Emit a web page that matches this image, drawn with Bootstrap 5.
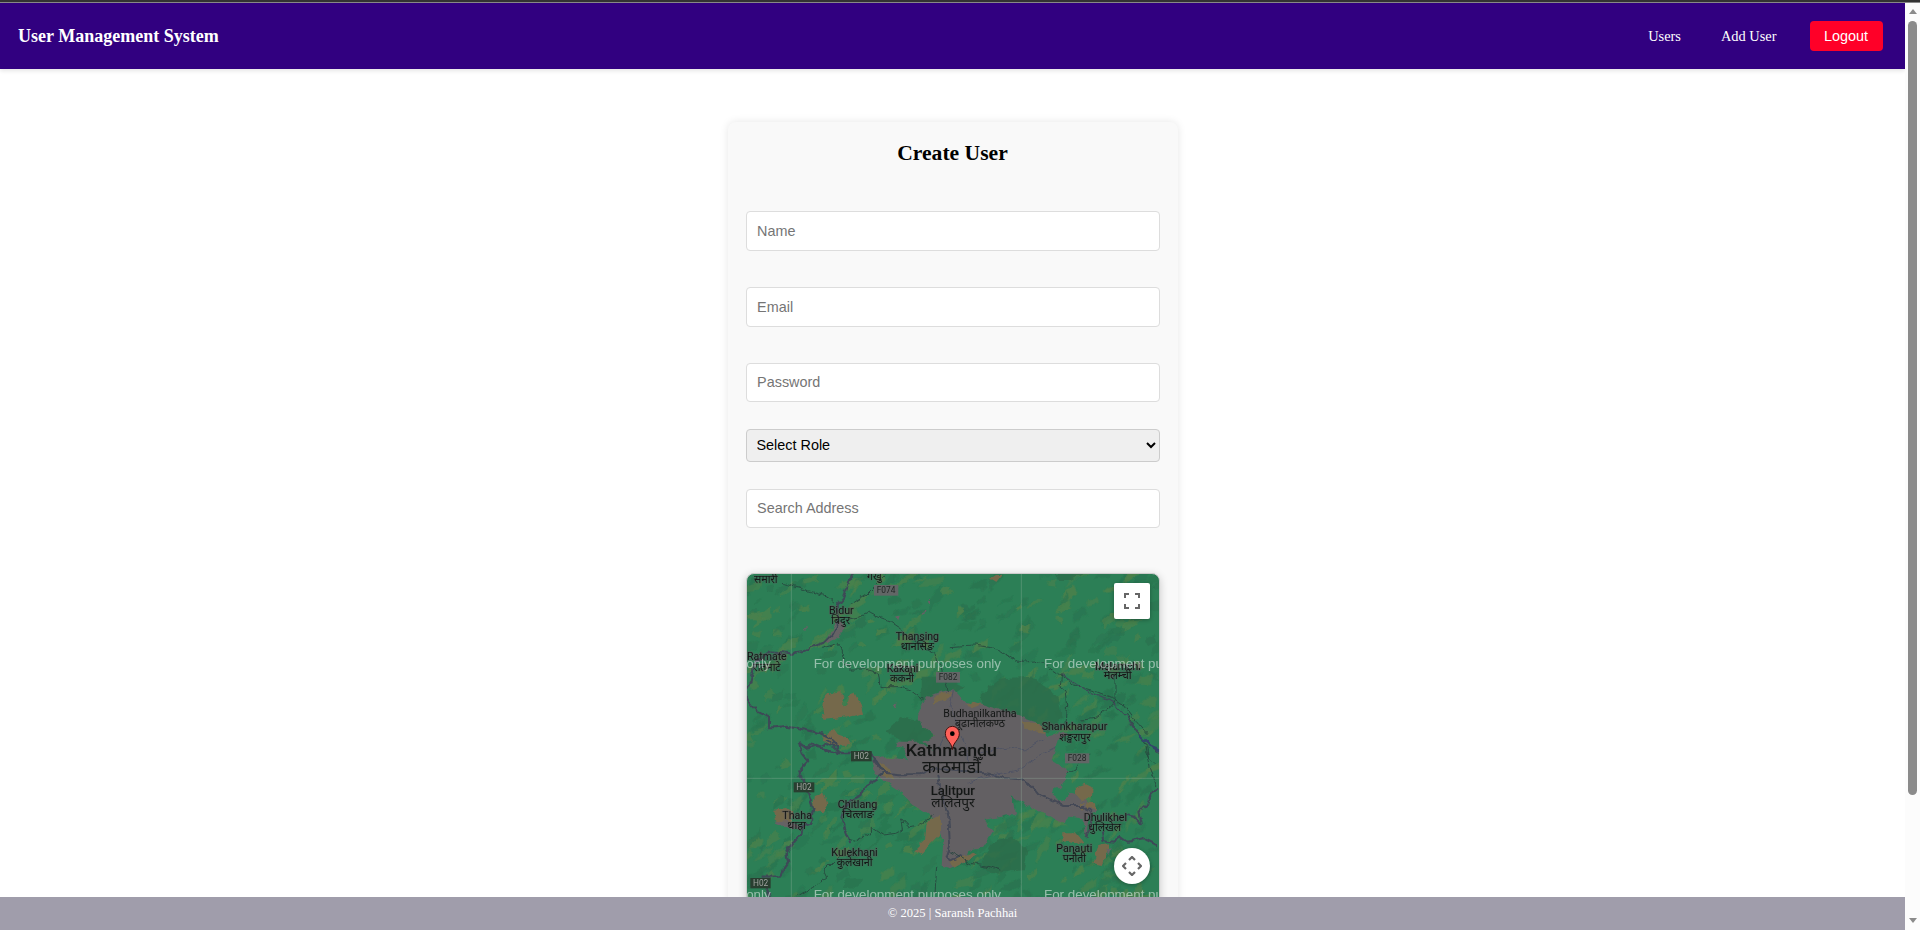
<!DOCTYPE html>
<html lang="en">
<head>
<meta charset="utf-8">
<title>User Management System</title>
<link href="https://cdn.jsdelivr.net/npm/bootstrap@5.3.0/dist/css/bootstrap.min.css" rel="stylesheet">
<style>
html{font-size:16px}
body{font-family:"Liberation Serif",serif;font-size:14.4px;color:#000;height:930px;line-height:1.2}
.window-edge{height:3px;background:#333;border-bottom:1px solid #888}
.topbar{height:66px;background:#310080;padding:0 22px 0 18px;box-shadow:0 2px 4px rgba(0,0,0,.1);flex-shrink:0}
.topbar .navbar-brand{font-size:18px;font-weight:700;color:#fff;padding:0;line-height:20px}
.topbar .nav-link{font-size:14.4px;color:#fff;padding:1px 1px 0 0}
.menu{gap:39px}
.btn-logout{width:73px;height:30px;margin-left:-6.5px;padding:0 1px 0 0;border:0;border-radius:4px;background:#ff0028;color:#fff;font:14.4px/30px "Liberation Sans",sans-serif}
.user-card{width:450px;height:1000px;margin-top:53px;padding:19px 18px;background:#f9f9f9;border:0;border-radius:8px;box-shadow:0 0 9px rgba(0,0,0,.1)}
.user-card h2{font-size:21.6px;font-weight:700;line-height:25px;margin:0 0 45px}
.user-card .form-control,.user-card .form-select{font:14.4px "Liberation Sans",sans-serif;border-radius:4px;padding:0 10px 1px 10.6px;border:1px solid #ddd;background-color:#fff;color:#000;flex-shrink:0}
.user-card .form-control{height:39px}
.user-card .form-control.field-tall{height:40px;margin-bottom:36px;padding-bottom:0}
.form-control::placeholder{color:#757575}
.user-card .form-select{height:33px;margin:27px 0;background:#efefef;border-color:#ccc;appearance:auto;padding:0 0 1px 6px}
.map-box{height:414px;margin-top:45px;border:1px solid #ccc;border-radius:8px;background:#2c7f56;overflow:hidden;box-shadow:0 2px 8px rgba(0,0,0,.2);flex-shrink:0}
.map-box svg{display:block}
.map-btn{width:36px;height:36px;background:#fff;right:9px;box-shadow:0 1px 4px rgba(0,0,0,.3)}
.map-full{top:9px;border-radius:2px}
.map-pan{top:274px;border-radius:50%}
.page-foot{height:33px;background:#a09dab;color:#fff;font-size:12.6px;flex-shrink:0}
.scroll-rail{width:15px;background:#fcfcfc;padding:6px 0 7px}
.thumb{width:9px;height:774px;border-radius:5px;background:#8b8b8b;margin-top:7px}
.arrow{border:4.5px solid transparent;border-top-width:0;border-bottom:5px solid #8b8b8b}
.arrow.down{border-bottom-width:0;border-top:5px solid #8b8b8b}
.place{font-family:Roboto,sans-serif;font-weight:400;fill:#141716;stroke:#5c5a5c;stroke-opacity:.55;stroke-width:5px;paint-order:stroke;stroke-linejoin:round}
.place.town{font-weight:500}
.deva{font-family:"Noto Sans",sans-serif;font-weight:400;stroke-opacity:.3}
.mark-txt{font:41px "Liberation Sans",sans-serif;fill:#fff;fill-opacity:.5}
.shield{font:400 25px Roboto,sans-serif}
</style>
</head>
<body class="d-flex flex-column overflow-hidden m-0 bg-white">
<div class="window-edge flex-shrink-0"></div>
<div class="d-flex flex-grow-1 overflow-hidden">
 <div class="d-flex flex-column flex-grow-1 overflow-hidden">
  <nav class="topbar d-flex align-items-center justify-content-between position-relative">
   <a class="navbar-brand" href="#">User Management System</a>
   <div class="menu d-flex align-items-center">
    <a class="nav-link" href="#">Users</a><a class="nav-link" href="#">Add User</a>
    <button class="btn-logout">Logout</button>
   </div>
  </nav>
  <main class="flex-grow-1 overflow-hidden d-flex justify-content-center align-items-start">
   <form class="card user-card">
    <h2 class="text-center">Create User</h2>
    <input class="form-control field-tall" placeholder="Name">
    <input class="form-control field-tall" placeholder="Email">
    <input class="form-control" placeholder="Password">
    <select class="form-select"><option>Select Role</option></select>
    <input class="form-control" placeholder="Search Address">
    <div class="map-box position-relative">
<svg width="412" height="412" viewBox="36 42 1236 1236">
<defs><filter id="rough" x="0" y="0" width="1280" height="1280" filterUnits="userSpaceOnUse"><feTurbulence type="fractalNoise" baseFrequency=".035" numOctaves="3" seed="4" result="n"/><feDisplacementMap in="SourceGraphic" in2="n" scale="20" xChannelSelector="R" yChannelSelector="G"/></filter></defs>
<g id="terrain" filter="url(#rough)"></g>
<g filter="url(#rough)">
<g fill="#2d6c4b" opacity=".8">
 <path d="M500 470l70 20 40 60-20 20-60-5-80-50z"/><path d="M740 400l60-45 90-5 80 60 10 60-40 50-80-10-120-65z"/>
 <path d="M560 350l70 0 60 30-40 25-90 20z"/><path d="M770 850l60-20 50 40-10 60-100 10-30-30z"/><path d="M955 42h85l-30 18-40 0z"/>
</g>
<path fill="#636163" d="M555 450L575 410L615 395L655 388L700 435L720 425L765 440L815 455L880 480L915 492L935 530L990 515L1000 525L965 540L950 600L1005 635L975 670L978 710L945 730L1000 700L1050 715L1085 750L1060 770L1055 830L1040 790L985 790L925 760L885 740L850 720L830 705L840 760L800 770L745 780L775 812L745 860L700 870L690 905L645 925L620 918L625 840L600 780L570 755L530 730L500 700L470 680L420 640L410 590L480 595L520 600L505 565L480 560L485 545L550 545L600 580L565 545L600 530L545 480Z"/>
<g fill="#75694c">
 <path d="M262 450L270 415L285 400L312 393L328 408L324 434L336 438L344 404L362 402L375 430L384 460L340 472L268 479Z"/><path d="M270 520l20-8 45 17 12 20-60 10-20-20z"/>
 <path d="M240 705l25-10 12 40-15 22-30-5z"/><path d="M118 752l35-5 15 10 5 25-30 12-20-15z"/><path d="M575 785l40-20 0 60-25 25-30 35-20-15 30-30z"/>
 <path d="M1025 680l25-9 20 10-2 30-30 10-12-15z"/><path d="M1035 725l45 5 2 20-45-5z"/><path d="M985 820l40 0 20 25-25 10-35-10z"/><path d="M1090 855l30-5 0 20-20 45-25-5z"/>
 <path d="M590 412l35-15 30 0-20 22-40 12z"/><path d="M690 440l25-15 25 8-30 12zM860 485l50 5 20 30-50-10zM415 597l45 25 15 40-30-15z"/><path d="M265 542h75l-10 15-40 0z"/><path d="M645 905l70-30 10 8-70 40z"/>
 <path d="M763 55l20-13h20l-20 25z"/>
</g>
<g fill="#666265"><path d="M275 245l25-60 25 0 10 20-25 25-30 20zM480 170l15-5-5 15zM575 130l10-8 0 14zM205 210l10-10 0 12zM470 440l15-15-5 20zM120 785l40-5 40 20-30 8zM1040 735l15-12 0 20zM1110 870l20-5-5 20zM560 160l15-10-5 12zM1130 350l12-3-8 8z"/></g>
<path fill="#2c7f56" d="M950 705l15-20 25 0 15 20-30 20zM1000 770l40 5 10 25-20 15-40-20z"/>
<g fill="none" stroke="#3e4957" stroke-linejoin="round" stroke-linecap="round">
 <path stroke-width="6" d="M350 42l-10 30-15 40-20 25 5 45-10 25-10 20-20 20-25 10-20 5-15 10-20 3-20 10-30-5-35-3-30 20-15 5-5 25-8 40-10 20 0 30 15 20 20 20 30 15 0 30 20 0 30-5 30 5 30 8 50 10 30 15 15 30"/>
 <path stroke-width="7" d="M80 950L135 950L145 925L160 905L155 880L175 850L195 825L200 800L225 790L235 745L215 690L200 655L190 640L220 605L200 580L192 548L215 566L245 558L280 572L310 582L350 582L395 575L425 605L445 635M110 1010L80 960"/>
 <path stroke-width="6" d="M210 565l15-12 25 10 20-12 25 10 15 20M275 540l25 15 15 25"/>
 <path stroke-width="6" d="M445 640l-20 15-40 25-5 25-30 15-20 25-10 35 10 30 15 40"/>
 <path stroke-width="6" stroke="#444957" d="M415 600l30 38 50 5 60 0 50-20 50 10 50 0 60 5 40 15 50 5 30 15 25 30 45 20 30 15 60 0 20 20 10 30-20 40"/>
 <path stroke-width="6" stroke="#444957" d="M610 650l5 30 25 90 5 90-10 30 15 12 30-15"/>
 <path stroke-width="6" d="M1100 815l5 25 30 5 20-15 20 15 50-10 40 20"/><path stroke-width="6" d="M1270 690l-20 5-15 40-25 20 8 35-20-20-25-5"/>
 <path stroke-width="2.5" stroke="#27433d" d="M340 177l30-5 30-15 40 20 30 10 30 20 15 20 60 40 20 10 M140 70l20 5 70 20 50 15 20 20M350 130l40-25 60-60M600 280l5 25 15 10 20 80M260 265l50-15 15 20 0 40 20 5 0 15 45 0 40 10 5 40 20 0 40 0 30 10 40 30M640 260l80-5 60 10 70 40 55-5 70 45 40 30 70 20 50 20 30 20 30 40 40 45M980 345l-5 40 15 10 5 40-5 55M1140 340v75l-10 20-50 40-40 5M1175 460l45 80 20 50 20 20"/>
 <path stroke-width="2.5" stroke="#27433d" d="M360 845l40-20 15-20 30 20 40-5 20-10-5-30 20 20 35-5 40-30M185 1010l50-30 40-25-10-20 45-45M605 920l-5 80M645 875l60 35 60 10 30 10M1000 640l20-10 15-30 30-20M340 840l15 5M1235 560l10 60 20 60"/>
 <path stroke-width="4" d="M980 345L1050 390L1120 420L1140 432L1180 475L1220 535L1275 580"/>
 <path stroke-width="8" stroke="#33446a" d="M1215 530l25 25 35 15"/>
 <path stroke-width="3" stroke="#505364" d="M700 670l50-20 100-20 60-40 50-25M730 580l90-20 50 10 55-35M610 560l15-30 55 0 20 40v40M655 390l-10 50 20 50"/>
</g>
</g>
<path d="M169 42v1236M859 42v1236M36 655h1236" stroke="#a0b8a8" stroke-opacity=".32" stroke-width="3"/>
<g class="shield" text-anchor="middle">
 <g fill="#626666"><rect x="417" y="75" width="73" height="32"/><rect x="603" y="336" width="72" height="32"/><rect x="990" y="580" width="73" height="30"/></g>
 <g fill="#202725"><text x="453" y="99">F074</text><text x="639" y="361">F082</text><text x="1026" y="603">F028</text></g>
 <g fill="#293e30"><rect x="348" y="573" width="62" height="31"/><rect x="176" y="667" width="62" height="30"/><rect x="46" y="954" width="61" height="31"/></g>
 <g fill="#a0a4a0"><text x="379" y="597">H02</text><text x="207" y="691">H02</text><text x="77" y="979">H02</text></g>
</g>
<g id="places"></g>
<g id="marks"></g>
<path d="M652 569c-2-23-21-28-21-49a21 21 0 0 1 42 0c0 21-19 26-21 49z" fill="#ff6059" stroke="#441411" stroke-width="3"/><circle cx="652" cy="521" r="7" fill="#000"/>
</svg>
     <div class="map-btn map-full position-absolute d-flex align-items-center justify-content-center"><svg width="16" height="16" viewBox="0 0 16 16" fill="none" stroke="#666" stroke-width="2"><path d="M1 5V1h4M11 1h4v4M15 11v4h-4M5 15H1v-4"/></svg></div>
     <div class="map-btn map-pan position-absolute d-flex align-items-center justify-content-center"><svg width="20" height="20" viewBox="0 0 20 20" fill="none" stroke="#666" stroke-width="2.2"><path d="M7 4l3-3 3 3M7 16l3 3 3-3M4 7l-3 3 3 3M16 7l3 3-3 3"/></svg></div>
    </div>
   </form>
  </main>
  <footer class="page-foot d-flex align-items-center justify-content-center">© 2025 | Saransh Pachhai</footer>
 </div>
 <div class="scroll-rail d-flex flex-column align-items-center flex-shrink-0"><div class="arrow"></div><div class="thumb"></div><div class="arrow down mt-auto"></div></div>
</div>
<script src="https://cdn.jsdelivr.net/npm/bootstrap@5.3.0/dist/js/bootstrap.bundle.min.js"></script>
<script>
// hill shading: small slanted patches from a fixed seed
let seed = 7;
const rnd = () => (seed = (seed * 16807) % 2147483647) / 2147483647;
let hills = '';
for (let i = 0; i < 560; i++) {
  const x = 36 + rnd() * 1236, y = 42 + rnd() * 1000, l = 10 + rnd() * 38, w = 5 + rnd() * 13, a = -15 - rnd() * 50;
  const fill = rnd() < .52 ? '#4c814b' : '#2a7450';
  hills += `<path transform="translate(${x.toFixed()} ${y.toFixed()}) rotate(${a.toFixed()})" fill="${fill}" opacity="${(.45 + rnd() * .45).toFixed(2)}" d="M${-l} 0L${-l / 3} ${-w}L${l} ${-w / 2}L${l / 2} ${w}Z"/>`;
}
document.getElementById('terrain').innerHTML = hills;
// left, right, baseline, size, text, kind (1 = Devanagari, 2 = larger town)
const names = [
 [57,128,70,32,'समारी',1],[396,440,61,32,'गेखु',1],
 [282,356,161,33,'Bidur'],[289,345,193,34,'बिदुर',1],[482,612,239,33,'Thansing'],[497,597,270,34,'थानसिङ',1],
 [36,155,301,33,'Ratmate'],[55,137,332,34,'रातमाटे',1],[455,550,335,33,'Kakani'],[465,537,366,32,'ककनी',1],
 [625,845,471,32,'Budhanilkantha'],[660,810,500,32,'बूढानीलकण्ठ',1],[920,1117,511,33,'Shankharapur'],[973,1067,543,33,'शङ्खरापुर',1],
 [1080,1217,329,33,'Melamchi'],[1106,1190,358,33,'मेलम्ची',1],
 [512,786,588,52,'Kathmandu',2],[562,737,640,52,'काठमाडौँ',1],[587,720,705,39,'Lalitpur',2],[589,719,742,40,'ललितपुर',1],
 [308,427,744,33,'Chitlang'],[321,417,775,33,'चित्लाङ',1],[142,231,777,33,'Thaha'],[157,213,808,33,'थाहा',1],
 [289,428,888,33,'Kulekhani'],[305,413,919,33,'कुलेखानी',1],[1046,1176,782,33,'Dhulikhel'],[1060,1158,813,33,'धुलिखेल',1],
 [964,1072,877,33,'Panauti'],[983,1053,907,33,'पनौती',1]];
document.getElementById('places').innerHTML = names.map(([l, r, y, s, t, d]) =>
 `<text class="place ${['', 'deva', 'town'][d || 0]}" x="${l}" y="${y}" font-size="${s}" textLength="${r - l}" lengthAdjust="spacingAndGlyphs">${t}</text>`).join('');
let marks = '';
for (const y of [325, 1016]) for (const x of [-455, 236, 927])
  marks += `<text class="mark-txt" x="${x}" y="${y}" textLength="562" lengthAdjust="spacingAndGlyphs">For development purposes only</text>`;
document.getElementById('marks').innerHTML = marks;
</script>
</body>
</html>
